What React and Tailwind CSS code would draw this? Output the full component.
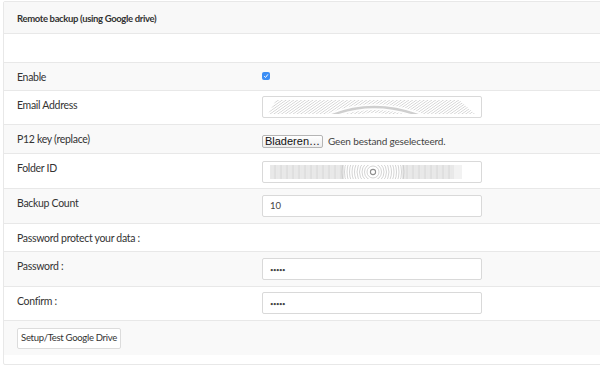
import React from "react";

const font = { fontFamily: "Lato, 'Open Sans', sans-serif" };

function EmailNoise() {
  return (
    <svg width="217" height="20" viewBox="0 0 217 20" className="block">
      <defs>
        <pattern id="hatch" width="2.2" height="2.2" patternUnits="userSpaceOnUse" patternTransform="rotate(55)">
          <line x1="0" y1="0" x2="0" y2="2.2" stroke="#b9b9b9" strokeWidth="0.9" />
        </pattern>
        <clipPath id="trap">
          <polygon points="13,3 196,3 212,17 5,17" />
        </clipPath>
      </defs>
      <g clipPath="url(#trap)">
        <rect x="0" y="0" width="217" height="20" fill="url(#hatch)" />
        <path d="M60 22 Q110 -2 165 22" fill="none" stroke="#fff" strokeWidth="6" opacity="0.9" />
        <path d="M60 22 Q110 -2 165 22" fill="none" stroke="#cfcfcf" strokeWidth="2.5" />
        <path d="M80 22 Q110 10 142 22" fill="#fff" />
      </g>
    </svg>
  );
}

function FolderNoise() {
  const lines = [];
  for (let x = 8; x < 200; x += 2) {
    const d = Math.abs(x - 110);
    if (d < 30) continue;
    const shade = x > 190 ? "#dedede" : x % 6 === 0 ? "#b0b0b0" : "#c6c6c6";
    lines.push(<line key={x} x1={x} y1="3" x2={x} y2="17" stroke={shade} strokeWidth="0.8" />);
  }
  const arcs = [];
  for (let r = 6; r <= 32; r += 2.5) {
    arcs.push(<circle key={r} cx="110" cy="10" r={r} fill="none" stroke="#c2c2c2" strokeWidth="0.7" />);
  }
  return (
    <svg width="217" height="20" viewBox="0 0 217 20" className="block">
      <defs>
        <clipPath id="band">
          <rect x="6" y="3" width="200" height="14" />
        </clipPath>
      </defs>
      <g clipPath="url(#band)">
        {lines}
        {arcs}
      </g>
      <circle cx="110" cy="10" r="2.6" fill="none" stroke="#8f8f8f" strokeWidth="1.1" />
    </svg>
  );
}

function Input({ children }) {
  return (
    <div className="w-[220px] h-[22px] border border-[#d9d9d9] rounded-[2px] bg-white flex items-center overflow-hidden">
      {children}
    </div>
  );
}

function Row({ h, bg, label, children, topLine = true, pt = "pt-[6px]", vpt = "pt-[6px]" }) {
  return (
    <div className={`flex ${h} ${bg} ${topLine ? "border-t border-[#e8e8e8]" : ""}`}>
      <div className={`w-[258px] shrink-0 pl-[13px] ${pt} text-[10.5px] tracking-[-0.3px] leading-[17px] text-[#333] whitespace-nowrap`}>{label}</div>
      <div className={`${vpt}`}>{children}</div>
    </div>
  );
}

export default function App() {
  return (
    <div className="w-[600px] h-[379px] overflow-hidden bg-white" style={font}>
      <div className="mt-[1px] ml-[3px] w-[640px] border border-[#e8e8e8] rounded-[2px]">
        <div className="h-[32px] bg-[#f8f8f8] border-b border-[#e8e8e8] flex items-center pl-[13px] pt-[4px] text-[9.5px] tracking-[-0.35px] font-bold text-[#333] whitespace-nowrap">
          Remote backup (using Google drive)
        </div>
        <div className="h-[28px]" />
        <Row h="h-[28px]" bg="bg-[#f9f9f9]" label="Enable" vpt="pt-[9px]">
          <div className="w-[8px] h-[8px] rounded-[2px] bg-[#3b8ef5] flex items-center justify-center">
            <svg width="6" height="6" viewBox="0 0 6 6">
              <path d="M1.2 3.2 L2.5 4.5 L4.9 1.4" fill="none" stroke="#fff" strokeWidth="1" />
            </svg>
          </div>
        </Row>
        <Row h="h-[34px]" bg="bg-white" label="Email Address" vpt="pt-[5px]">
          <Input>
            <EmailNoise />
          </Input>
        </Row>
        <Row h="h-[29px]" bg="bg-[#f9f9f9]" label="P12 key (replace)" vpt="pt-[9px]">
          <div className="flex items-center">
            <div
              className="w-[61px] h-[13px] border border-[#b5b5b5] rounded-[2px] bg-gradient-to-b from-white to-[#ededed] flex items-center justify-center text-[11px] leading-none text-[#111] whitespace-nowrap"
              style={{ fontFamily: "'Liberation Sans', Arial, sans-serif" }}
            >
              Bladeren…
            </div>
            <span className="ml-[5px] text-[10px] tracking-[-0.15px] text-[#444] whitespace-nowrap">Geen bestand geselecteerd.</span>
          </div>
        </Row>
        <Row h="h-[35px]" bg="bg-white" label="Folder ID" vpt="pt-[7px]">
          <Input>
            <FolderNoise />
          </Input>
        </Row>
        <Row h="h-[35px]" bg="bg-[#f9f9f9]" label="Backup Count" vpt="pt-[6px]">
          <Input>
            <span className="pl-[7px] text-[9.5px] text-[#444]">10</span>
          </Input>
        </Row>
        <Row h="h-[28px]" bg="bg-white" label="Password protect your data :" />
        <Row h="h-[35px]" bg="bg-[#f9f9f9]" label="Password :" vpt="pt-[6px]">
          <Input>
            <span className="pl-[7px] text-[6px] tracking-[-0.5px] text-[#444]">•••••</span>
          </Input>
        </Row>
        <Row h="h-[34px]" bg="bg-white" label="Confirm :" vpt="pt-[5px]">
          <Input>
            <span className="pl-[7px] text-[6px] tracking-[-0.5px] text-[#444]">•••••</span>
          </Input>
        </Row>
        <div className="h-[35px] bg-[#f9f9f9] border-t border-[#e8e8e8] pl-[13px] pt-[7px]">
          <div className="w-[104px] h-[21px] bg-white border border-[#dcdcdc] rounded-[2px] flex items-center justify-center text-[9.5px] tracking-[-0.3px] text-[#333] whitespace-nowrap">
            Setup/Test Google Drive
          </div>
        </div>
        <div className="h-[9px]" />
      </div>
    </div>
  );
}
